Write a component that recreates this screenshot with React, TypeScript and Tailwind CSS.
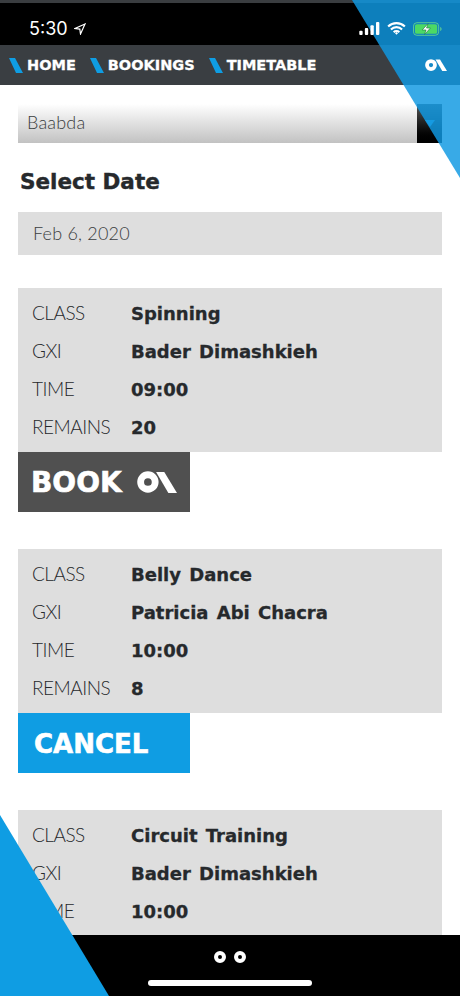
const heavy = "font-['DejaVu_Sans',sans-serif] font-bold";
const light = "font-['Lato',sans-serif] font-light";

function Logo({ className }: { className: string }) {
  return (
    <svg viewBox="0 0 44 24" className={className}>
      <circle cx="12" cy="12" r="8" fill="none" stroke="currentColor" strokeWidth="7.5" />
      <path d="M21 1h9l14 23h-9.5z" fill="currentColor" />
    </svg>
  );
}

function NavItem({ label }: { label: string }) {
  return (
    <div className="flex items-center gap-[4px]">
      <svg viewBox="0 0 14 15" className="w-[14px] h-[15px]">
        <path d="M0 0h6l8 15H7z" fill="#0f9de3" />
      </svg>
      <span className={`${heavy} text-[14.500px] leading-none text-white [-webkit-text-stroke:0.3px_white]`}>{label}</span>
    </div>
  );
}

function StatusIcons() {
  return (
    <div className="relative z-10 flex items-center gap-[7px] text-white">
      <svg viewBox="0 0 22 14" className="w-[21px] h-[13px]">
        <rect x="0" y="9.500" width="3.600" height="4.500" rx="1" fill="currentColor" />
        <rect x="6" y="6.500" width="3.600" height="7.500" rx="1" fill="currentColor" />
        <rect x="12" y="3.500" width="3.600" height="10.500" rx="1" fill="currentColor" />
        <rect x="18" y="0" width="3.600" height="14" rx="1" fill="currentColor" />
      </svg>
      <svg viewBox="0 0 20 14" className="w-[19px] h-[13px]">
        <path d="M1 4.800a13 13 0 0 1 18 0M4 8a8.600 8.600 0 0 1 12 0M7 11a4.200 4.200 0 0 1 6 0" fill="none" stroke="currentColor" strokeWidth="2.300" />
        <path d="M8.400 12l1.600-1.200 1.600 1.200-1.600 1.800z" fill="currentColor" />
      </svg>
      <svg viewBox="0 0 31 14" className="w-[30px] h-[14px]">
        <rect x="0.500" y="0.500" width="26" height="13" rx="3.500" fill="none" stroke="#6fe08a" strokeOpacity="0.8" />
        <rect x="2" y="2" width="23" height="10" rx="2" fill="#4cd964" />
        <path d="M28 5v4c1-.3 1.600-1 1.600-2S29 5.300 28 5z" fill="#6fe08a" fillOpacity="0.7" />
        <path d="M15.500 1.500L9.500 8h4l-1.500 4.500L18 6h-4z" fill="#ffffff" stroke="#1c6b3a" strokeWidth="0.600" />
      </svg>
    </div>
  );
}

function Row({ label, value }: { label: string; value: string }) {
  return (
    <div className="flex items-center h-[38px]">
      <span className={`w-[99px] ${light} text-[19px] text-[#26292c] tracking-[-0.5px]`}>{label}</span>
      <span className={`${heavy} text-[18px] text-[#26292c] [word-spacing:2px] [-webkit-text-stroke:0.3px_#26292c]`}>{value}</span>
    </div>
  );
}

function ClassCard({ name, gxi, time, remains }: { name: string; gxi: string; time: string; remains?: string }) {
  return (
    <div className="bg-[#dedede] h-[164px] px-[14px] pt-[7px]">
      <Row label="CLASS" value={name} />
      <Row label="GXI" value={gxi} />
      <Row label="TIME" value={time} />
      {remains && <Row label="REMAINS" value={remains} />}
    </div>
  );
}

export default function App() {
  return (
    <div className="relative w-[460px] h-[996px] overflow-hidden bg-white flex flex-col">
      {/* status bar */}
      <div className="h-[45px] shrink-0 bg-black flex items-center justify-between pl-[29px] pr-[17px] pt-[9px] border-t-[3px] border-[#3a3d40]">
        <div className="flex items-center gap-[6px] text-white">
          <span className="font-['Inter',sans-serif] text-[18px] font-normal leading-none">5:30</span>
          <svg viewBox="0 0 12 12" className="w-[12px] h-[12px]">
            <path d="M11 1L1 5.500l4.800.6.7 4.900z" fill="none" stroke="currentColor" strokeWidth="1.200" />
          </svg>
        </div>
        <StatusIcons />
      </div>

      {/* nav */}
      <div className="h-[40px] shrink-0 bg-[#3a3e42] flex items-center justify-between pl-[9px] pr-[13px]">
        <div className="flex items-center gap-[14px]">
          <NavItem label="HOME" />
          <NavItem label="BOOKINGS" />
          <NavItem label="TIMETABLE" />
        </div>
        <Logo className="relative z-10 w-[22px] h-[12px] text-white" />
      </div>

      {/* content */}
      <div className="flex-1 min-h-0 overflow-hidden px-[18px] pt-[19px]">
        <div className="h-[39px] flex bg-gradient-to-b from-white to-[#c2c2c2]">
          <div className={`flex-1 flex items-center pl-[9px] pb-[3px] ${light} text-[18px] tracking-[0.2px] text-[#3a3d40]`}>Baabda</div>
          <div className="w-[25px] bg-gradient-to-b from-[#5a5a5a] to-black flex items-center justify-center">
            <div className="w-0 h-0 border-x-[5px] border-x-transparent border-t-[7px] border-t-[#2f9fdc]" />
          </div>
        </div>

        <h1 className={`${heavy} text-[21.500px] leading-none text-[#26292c] mt-[28px] ml-[2px] [-webkit-text-stroke:0.4px_#26292c]`}>Select Date</h1>

        <div className={`h-[43px] bg-[#dedede] mt-[19px] flex items-center pl-[15px] ${light} text-[18px] tracking-[0.2px] text-[#3a3d40]`}>Feb 6, 2020</div>

        <div className="mt-[33px]">
          <ClassCard name="Spinning" gxi="Bader Dimashkieh" time="09:00" remains="20" />
          <button className="w-[172px] h-[60px] bg-[#505050] flex items-center pl-[13px] gap-[15px] text-white">
            <span className={`${heavy} text-[28px] leading-none pt-[2px] [-webkit-text-stroke:0.6px_white]`}>BOOK</span>
            <Logo className="w-[40px] h-[22px] text-white" />
          </button>
        </div>

        <div className="mt-[37px]">
          <ClassCard name="Belly Dance" gxi="Patricia Abi Chacra" time="10:00" remains="8" />
          <button className="w-[172px] h-[60px] bg-[#0f9de3] flex items-center pl-[16px] text-white">
            <span className={`${heavy} text-[26px] leading-none pt-[2px] [-webkit-text-stroke:0.6px_white]`}>CANCEL</span>
          </button>
        </div>

        <div className="mt-[37px]">
          <ClassCard name="Circuit Training" gxi="Bader Dimashkieh" time="10:00" />
        </div>
      </div>

      {/* bottom bar */}
      <div className="h-[61px] shrink-0 bg-black relative flex justify-center pt-[16px]">
        <div className="flex gap-[8px] h-[12px]">
          <div className="w-[12px] h-[12px] rounded-full border-[4px] border-white" />
          <div className="w-[12px] h-[12px] rounded-full border-[4px] border-white" />
        </div>
        <div className="absolute left-[148px] bottom-[10px] w-[164px] h-[6px] rounded-full bg-white" />
      </div>

      {/* corner triangles */}
      <div className="absolute top-0 right-0 w-[108px] h-[178px] bg-[#1099e2]/[0.83] [clip-path:polygon(0_0,100%_0,100%_100%)]" />
      <div className="absolute bottom-0 left-0 w-[109px] h-[181px] bg-[#0f9de3] [clip-path:polygon(0_0,100%_100%,0_100%)]" />
    </div>
  );
}
